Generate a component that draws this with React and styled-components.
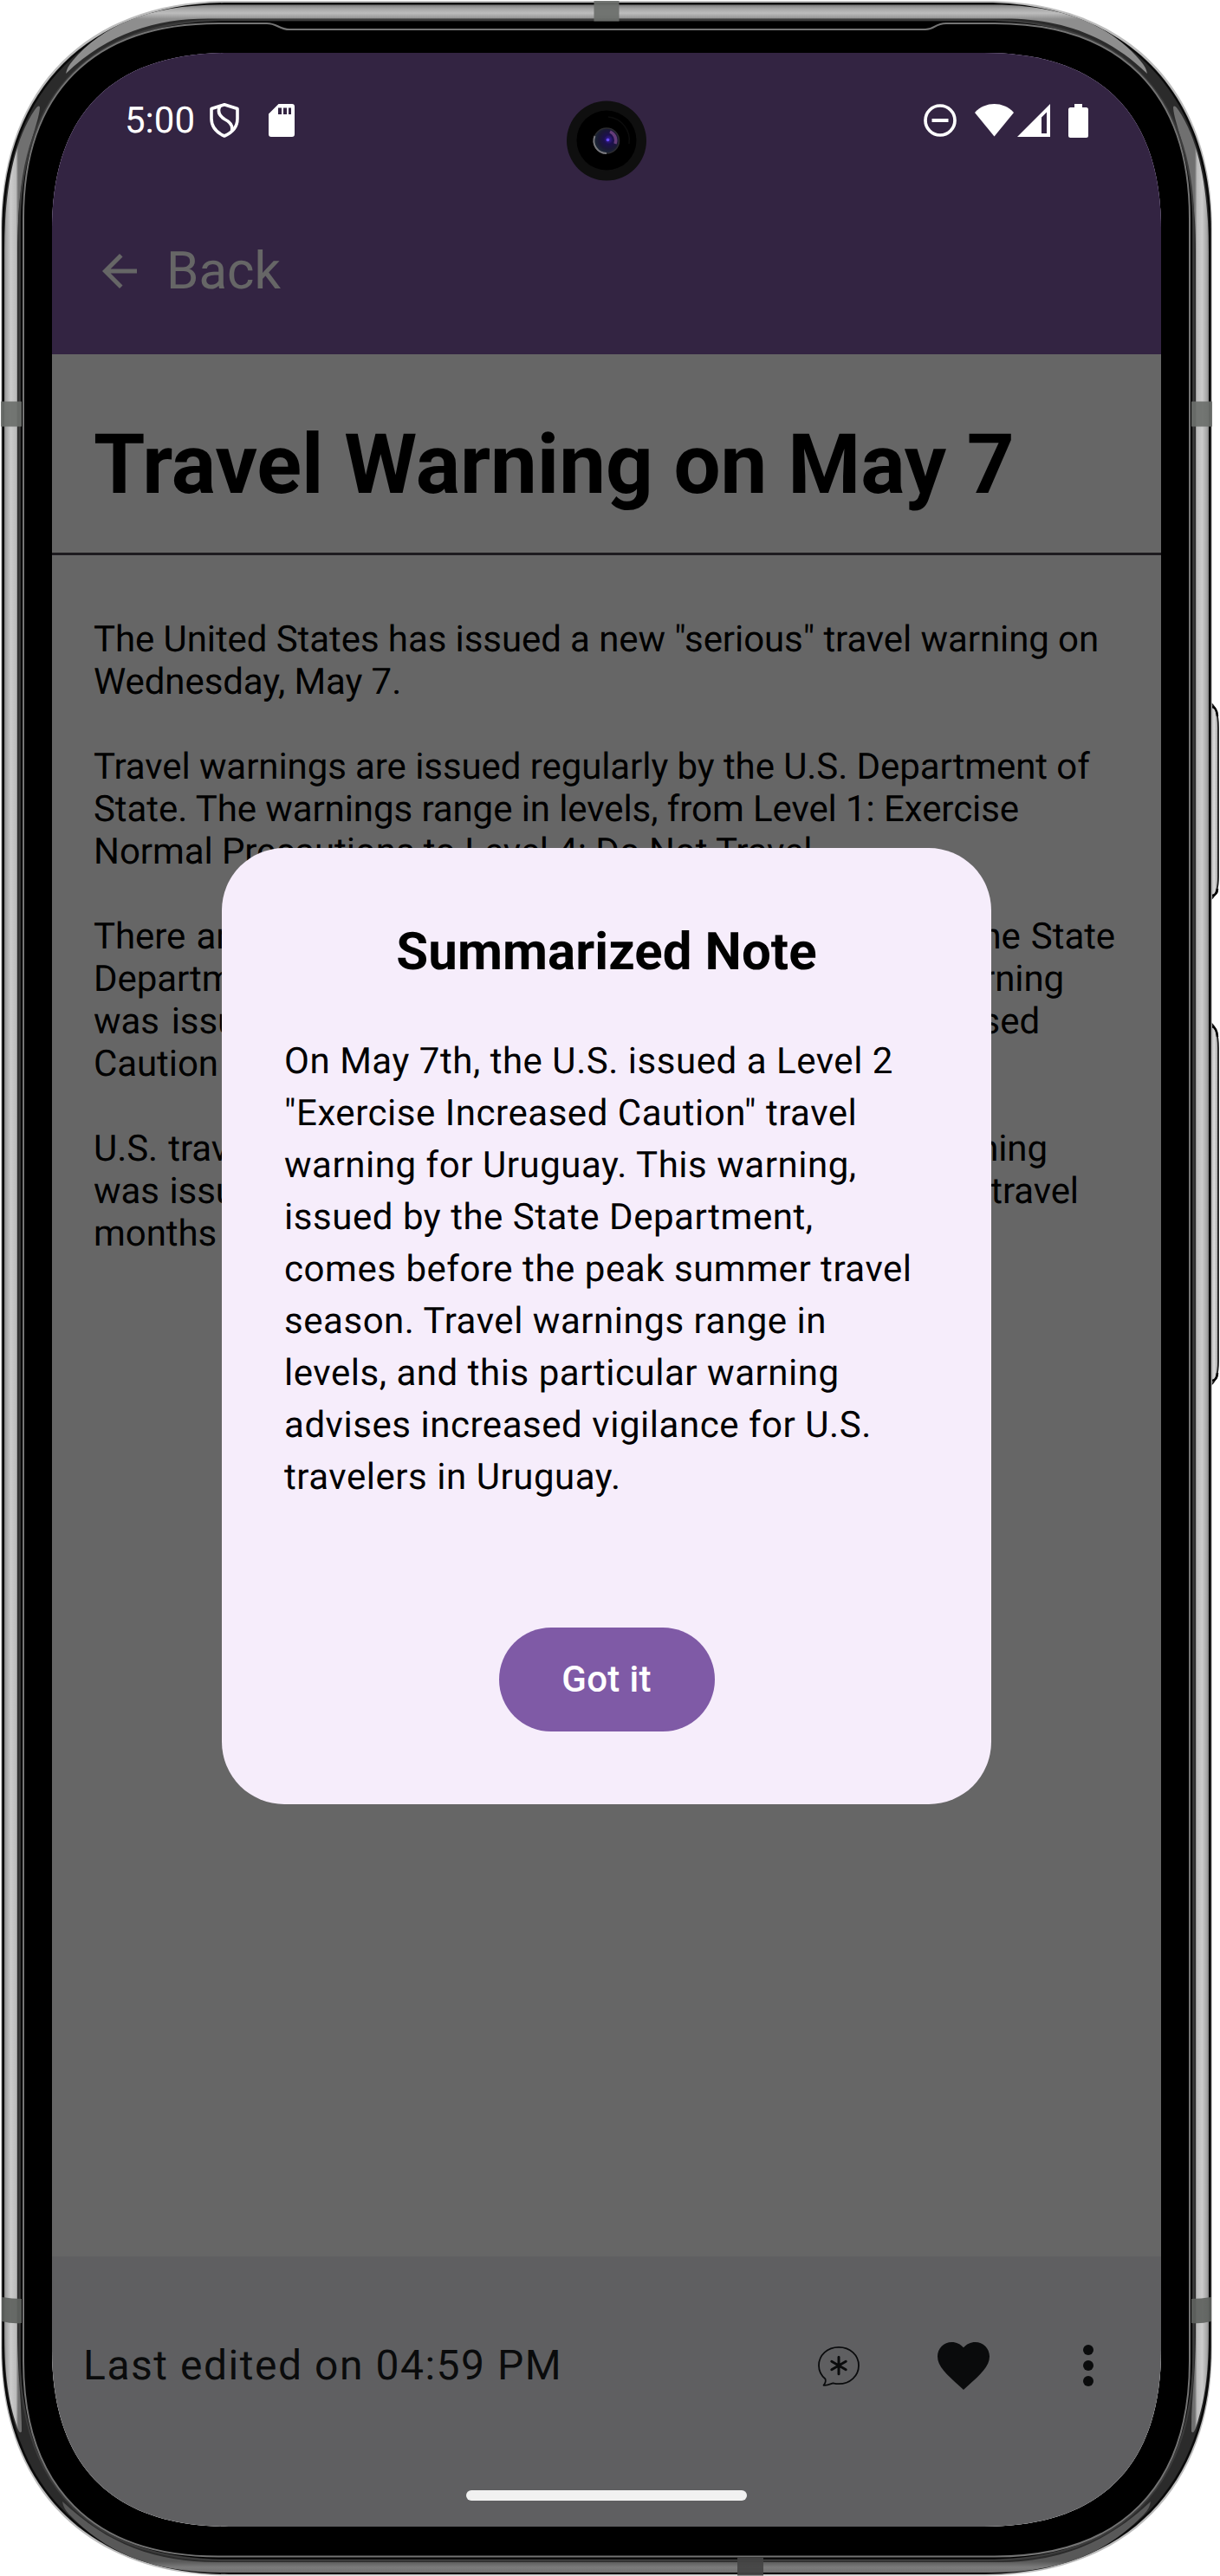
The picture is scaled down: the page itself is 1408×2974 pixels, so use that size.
import React from "react";
import styled, { createGlobalStyle } from "styled-components";

const GlobalStyle = createGlobalStyle`
  * { box-sizing: border-box; }
  body { margin: 0; background: #fff; text-rendering: geometricPrecision; }
`;

const SCREEN_CLIP =
  "path('M0 204C0 70 70 0 204 0H1076C1210 0 1280 70 1280 204V2652C1280 2786 1210 2856 1076 2856H204C70 2856 0 2786 0 2652Z')";

const Device = styled.main`
  position: relative;
  width: 1408px;
  height: 2974px;
  padding: 61px 68px 57px 60px;
  font-family: Roboto, "Liberation Sans", sans-serif;
  color: #000;
`;

const FrameSvg = styled.svg`
  position: absolute;
  inset: 0;
  display: block;
`;

const Screen = styled.div`
  position: relative;
  display: flex;
  flex-direction: column;
  width: 1280px;
  height: 2856px;
  background: #fff;
  clip-path: ${SCREEN_CLIP};
`;

const TopBar = styled.header`
  display: flex;
  align-items: center;
  flex: none;
  height: 348px;
  padding: 156px 48px 0;
  gap: 24px;
  background: #7f5aa6;
  color: #fff;
  font-size: 60px;
  line-height: 70px;
`;

const NoteTitle = styled.h1`
  flex: none;
  margin: 0;
  height: 232px;
  padding: 72px 48px 0;
  border-bottom: 3px solid #49454f;
  font-size: 96px;
  line-height: 113px;
  font-weight: 700;
  letter-spacing: -0.06px;
  white-space: nowrap;
`;

const NoteBody = styled.section`
  display: flex;
  flex-direction: column;
  flex: 1;
  gap: 49px;
  padding: 73px 48px 0;
  font-size: 42px;
  line-height: 49px;
  letter-spacing: -0.08px;
`;

const Paragraph = styled.p`
  display: flex;
  flex-direction: column;
  margin: 0;
`;

const Line = styled.span`
  display: block;
  white-space: nowrap;
  ${(p) => p.$width && `width: ${p.$width}px; white-space: normal; text-align-last: justify;`}
`;

const BottomBar = styled.footer`
  display: flex;
  align-items: flex-start;
  justify-content: space-between;
  flex: none;
  height: 312px;
  padding: 54px 12px 0 36px;
  background: #eeeef3;
  color: #191c20;
`;

const EditedLabel = styled.span`
  line-height: 143px;
  font-size: 48px;
  letter-spacing: 1.53px;
`;

const Actions = styled.div`
  display: flex;
`;

const IconButton = styled.button`
  display: flex;
  align-items: center;
  justify-content: center;
  width: 144px;
  height: 144px;
  padding: 0;
  border: 0;
  background: none;
  color: inherit;
`;

const Scrim = styled.div`
  position: absolute;
  inset: 0;
  display: flex;
  align-items: flex-start;
  justify-content: center;
  padding-top: 918px;
  background: rgba(0, 0, 0, 0.6);
`;

const Dialog = styled.div`
  display: flex;
  flex-direction: column;
  align-items: center;
  width: 888px;
  height: 1104px;
  padding: 85px 72px 84px;
  border-radius: 72px;
  background: #f6edfb;
`;

const DialogTitle = styled.h2`
  margin: 0 0 62px;
  font-size: 60px;
  line-height: 70px;
  font-weight: 700;
  letter-spacing: 0.05px;
`;

const DialogText = styled.p`
  align-self: stretch;
  margin: 0;
  font-size: 42px;
  line-height: 60px;
  letter-spacing: 0.54px;
  white-space: nowrap;
`;

const DialogButton = styled.button`
  flex: none;
  width: 249px;
  height: 120px;
  margin-top: 143px;
  padding: 0;
  border: 0;
  border-radius: 60px;
  background: #7f5aa6;
  color: #fff;
  font: 500 42px/60px Roboto, "Liberation Sans", sans-serif;
  letter-spacing: 0.3px;
`;

const StatusBar = styled.div`
  position: absolute;
  inset: 0 0 auto;
  display: flex;
  align-items: center;
  justify-content: space-between;
  height: 156px;
  padding: 0 84px;
  color: #fff;
  font-size: 42px;
`;

const StatusGroup = styled.div`
  display: flex;
  align-items: center;
`;

const Glyph = styled.svg`
  display: block;
  margin-left: ${(p) => p.$gap || 0}px;
`;

const Camera = styled.svg`
  position: absolute;
  left: 594px;
  top: 55px;
`;

const HomePill = styled.div`
  position: absolute;
  left: 478px;
  bottom: 30px;
  width: 324px;
  height: 12px;
  border-radius: 6px;
  background: #f1f1f1;
`;

/* Outline with continuous-curvature corners. */
const squircle = (l, t, r, b, s, c) =>
  `M${l} ${t + s}C${l} ${t + c} ${l + c} ${t} ${l + s} ${t}H${r - s}C${r - c} ${t} ${r} ${t + c} ${r} ${t + s}` +
  `V${b - s}C${r} ${b - c} ${r - c} ${b} ${r - s} ${b}H${l + s}C${l + c} ${b} ${l} ${b - c} ${l} ${b - s}Z`;

const SideHighlight = () => (
  <path
    d="M5 290C5 228 14 165 40 127Q45 120 46 124C44 150 20 186 20 290V2690C20 2740 25 2770 25 2807Q23 2811 20 2803C9 2770 5 2740 5 2690Z"
    fill="url(#side)"
  />
);

const PhoneFrame = () => (
  <FrameSvg width="1408" height="2974" viewBox="0 0 1408 2974" aria-hidden="true">
    <defs>
      <linearGradient id="side" gradientUnits="userSpaceOnUse" x1="4" y1="0" x2="21" y2="0">
        <stop offset="0" stopColor="#777" />
        <stop offset=".2" stopColor="#a8a8a8" />
        <stop offset=".5" stopColor="#cbcbcb" />
        <stop offset=".85" stopColor="#bcbcbc" />
        <stop offset="1" stopColor="#707070" />
      </linearGradient>
      <linearGradient id="top" gradientUnits="userSpaceOnUse" x1="0" y1="5" x2="0" y2="22">
        <stop offset="0" stopColor="#777" />
        <stop offset=".3" stopColor="#a6a6a6" />
        <stop offset=".6" stopColor="#bdbdbd" />
        <stop offset="1" stopColor="#8e8e8e" />
      </linearGradient>
      <linearGradient id="bottom" gradientUnits="userSpaceOnUse" x1="0" y1="2957" x2="0" y2="2971">
        <stop offset="0" stopColor="#585858" />
        <stop offset=".5" stopColor="#7c7c7c" />
        <stop offset="1" stopColor="#6c6c6c" />
      </linearGradient>
      <linearGradient id="key" x1="0" y1="0" x2="1" y2="0">
        <stop offset="0" stopColor="#777" />
        <stop offset=".5" stopColor="#dedede" />
        <stop offset="1" stopColor="#a0a0a0" />
      </linearGradient>
      <radialGradient id="lens" cx=".58" cy=".45" r=".6">
        <stop offset="0" stopColor="#3c22a8" />
        <stop offset=".3" stopColor="#1c104e" />
        <stop offset=".65" stopColor="#1a1834" />
        <stop offset="1" stopColor="#1b2c36" />
      </radialGradient>
    </defs>
    <path d="M1396 811Q1406 816 1406 840V1012Q1406 1034 1396 1039Z" fill="url(#key)" stroke="#1a1a1a" strokeWidth="1.8" />
    <path d="M1396 1180Q1406 1186 1406 1210V1572Q1406 1594 1396 1600Z" fill="url(#key)" stroke="#1a1a1a" strokeWidth="1.8" />
    <path d="M1399 816Q1404.500 817 1405 827M1399 1034Q1405 1033 1405 1026M1399 1185Q1404.500 1187 1405 1197M1399 1594Q1405 1593 1405 1585" fill="none" stroke="#000" strokeWidth="2.5" />
    <path d={squircle(1.2, 1, 1398.8, 2973.5, 262, 100)} fill="#bdbdbd" />
    <path d={squircle(2.2, 3, 1397.8, 2972, 262, 101)} fill="#0a0a0a" />
    <path d={squircle(5, 6, 1395, 2969, 259, 99)} fill="#2b2b2b" />
    <SideHighlight />
    <g transform="matrix(-1 0 0 1 1400 0)">
      <SideHighlight />
    </g>
    <path
      d="M76 85Q77 78 84 70C118 30 172 5 256 5.500H1144C1228 5 1282 30 1316 70Q1323 78 1324 85C1275 38 1220 21.500 1160 21.500H240C180 21.500 125 38 76 85Z"
      fill="url(#top)"
    />
    <path
      d="M72 2888Q73 2896 80 2903C120 2944 170 2970 256 2970H1144C1230 2970 1280 2944 1320 2903Q1327 2896 1328 2888C1275 2938 1220 2958 1150 2958H250C180 2958 125 2938 72 2888Z"
      fill="url(#bottom)"
    />
    <path d={squircle(22.5, 23, 1377.5, 2956, 240, 84)} fill="none" stroke="#3c3c3c" strokeWidth="2" />
    <path d={squircle(24, 24.5, 1376, 2954.500, 238, 83)} fill="#000" />
    <path
      d="M27 252C27 107 107 27 252 27H308C320 27 322 34 334 34H1068C1080 34 1078 27 1092 27H1148C1293 27 1373 107 1373 252V2726C1373 2871 1293 2951.500 1148 2951.500H252C107 2951.500 27 2871 27 2726Z"
      fill="#000"
      stroke="#747474"
      strokeWidth="2"
    />
    <g fill="#6c6f6c" opacity=".93">
      <rect x="685.5" y="1" width="29" height="23.5" />
      <rect x="1" y="463.500" width="24" height="29" />
      <rect x="1375" y="463.500" width="24" height="29" />
      <path d="M2 2652Q14 2654 25 2654V2682Q14 2683 2 2680Z" fill="#5f625f" />
      <path d="M1398 2652Q1386 2654 1375 2654V2682Q1386 2683 1398 2680Z" fill="#5f625f" />
      <rect x="851" y="2953" width="30" height="20.5" fill="#444" />
    </g>
  </FrameSvg>
);

export default function App() {
  return (
    <>
      <GlobalStyle />
      <Device>
        <PhoneFrame />
        <Screen>
          <TopBar>
            <svg width="60" height="60" viewBox="0 0 24 24" fill="currentColor">
              <path d="M20 11H7.830l5.590-5.590L12 4l-8 8 8 8 1.410-1.410L7.830 13H20v-2z" />
            </svg>
            <span>Back</span>
          </TopBar>
          <NoteTitle>Travel Warning on May 7</NoteTitle>
          <NoteBody>
            <Paragraph>
              <Line>The United States has issued a new "serious" travel warning on</Line>
              <Line>Wednesday, May 7.</Line>
            </Paragraph>
            <Paragraph>
              <Line>Travel warnings are issued regularly by the U.S. Department of</Line>
              <Line>State. The warnings range in levels, from Level 1: Exercise</Line>
              <Line>Normal Precautions to Level 4: Do Not Travel.</Line>
            </Paragraph>
            <Paragraph>
              <Line $width={1179}>There are several countries under some advisory, and the State</Line>
              <Line $width={1120}>Department has updated Uruguay to a Level 2. The warning</Line>
              <Line $width={1092}>was issued on May 7 and is a Level 2: Exercise Increased</Line>
              <Line>Caution</Line>
            </Paragraph>
            <Paragraph>
              <Line $width={1101}>U.S. travelers headed to Uruguay should know this warning</Line>
              <Line $width={1137}>was issued just ahead of the peak of the busy summer travel</Line>
              <Line>months</Line>
            </Paragraph>
          </NoteBody>
          <BottomBar>
            <EditedLabel>Last edited on 04:59 PM</EditedLabel>
            <Actions>
              <IconButton aria-label="Summarize">
                <svg width="72" height="72" viewBox="0 0 72 72" fill="none" stroke="currentColor" strokeLinejoin="round">
                  <path
                    d="M36 14.800C49 14.800 59 24 59 36S49 57.200 36 57.200C33.500 57.200 31.500 56.800 29.500 56.300C26 57.500 22.500 59.600 18.500 58.800C20.500 56.500 21.500 54.500 20.500 51.500C15.800 47.500 13 42 13 36C13 24 23 14.800 36 14.800Z"
                    strokeWidth="1.8"
                  />
                  <path d="M36 26.300V45.700M27.800 31.300L44.200 40.700M44.200 31.300L27.800 40.700" strokeWidth="3" strokeLinecap="round" />
                </svg>
              </IconButton>
              <IconButton aria-label="Favorite">
                <svg width="72" height="72" viewBox="0 0 24 24" fill="currentColor">
                  <path d="M12 21.350l-1.450-1.320C5.400 15.360 2 12.280 2 8.500 2 5.420 4.420 3 7.500 3c1.740 0 3.410.810 4.500 2.090C13.090 3.810 14.760 3 16.500 3 19.580 3 22 5.420 22 8.500c0 3.780-3.400 6.860-8.550 11.540L12 21.350z" />
                </svg>
              </IconButton>
              <IconButton aria-label="More">
                <svg width="72" height="72" viewBox="0 0 24 24" fill="currentColor">
                  <circle cx="12" cy="6" r="2" />
                  <circle cx="12" cy="12" r="2" />
                  <circle cx="12" cy="18" r="2" />
                </svg>
              </IconButton>
            </Actions>
          </BottomBar>
          <Scrim>
            <Dialog role="dialog">
              <DialogTitle>Summarized Note</DialogTitle>
              <DialogText>
                On May 7th, the U.S. issued a Level 2<br />
                "Exercise Increased Caution" travel<br />
                warning for Uruguay. This warning,<br />
                issued by the State Department,<br />
                comes before the peak summer travel<br />
                season. Travel warnings range in<br />
                levels, and this particular warning<br />
                advises increased vigilance for U.S.<br />
                travelers in Uruguay.
              </DialogText>
              <DialogButton>Got it</DialogButton>
            </Dialog>
          </Scrim>
          <StatusBar>
            <StatusGroup>
              <span>5:00</span>
              <Glyph $gap={15.5} width="36" height="42" viewBox="0 0 36 42" fill="none" stroke="currentColor" strokeWidth="3.6">
                <path d="M18 2.800L33 7.500V19C33 28 27 35 18 39C9 35 3 28 3 19V7.500Z" strokeLinejoin="round" />
                <path d="M13 4.500C10 10 11 15 18 19.500C25 23 28 27 26.500 33" />
              </Glyph>
              <Glyph $gap={33.5} width="30" height="38" viewBox="0 0 30 38" fill="currentColor">
                <path
                  fillRule="evenodd"
                  d="M11.500 0H27Q30 0 30 3V35Q30 38 27 38H3Q0 38 0 35V11.500ZM11 4.500V12H15V4.500ZM17 4.500V12H21V4.500ZM23 4.500V12H26V4.500Z"
                />
              </Glyph>
            </StatusGroup>
            <StatusGroup>
              <Glyph width="38" height="38" viewBox="0 0 38 38" fill="none" stroke="currentColor">
                <circle cx="19" cy="19" r="17" strokeWidth="3.700" />
                <path d="M9.500 19H28.500" strokeWidth="3.800" />
              </Glyph>
              <Glyph $gap={21.5} width="45" height="38" viewBox="0 0 45 38" fill="currentColor">
                <path d="M22.500 37.500L0 10C12 -3.200 33 -3.200 45 10Z" />
              </Glyph>
              <Glyph $gap={4} width="38" height="38" viewBox="0 0 38 38" fill="currentColor">
                <path fillRule="evenodd" d="M38 0V38H0ZM34 9.500L28 15.500V34H34Z" />
              </Glyph>
              <Glyph $gap={21} width="23" height="39" viewBox="0 0 23 39" fill="currentColor">
                <path d="M7 0H16V4H20.500Q23 4 23 6.500V36.500Q23 39 20.500 39H2.500Q0 39 0 36.500V6.500Q0 4 2.500 4H7Z" />
              </Glyph>
            </StatusGroup>
          </StatusBar>
          <Camera width="92" height="94" viewBox="0 0 92 94">
            <circle cx="46" cy="46.500" r="46" fill="#0f0f0f" />
            <circle cx="46" cy="46" r="34.500" fill="#000" />
            <path d="M48 19A27 27 0 0 1 72 50" fill="none" stroke="#0c0c0c" strokeWidth="1.500" />
            <circle cx="46" cy="46.500" r="14.500" fill="url(#lens)" stroke="#2b2b2f" strokeWidth="1.500" />
            <path d="M32.500 41A14.500 14.500 0 0 0 46 61" fill="none" stroke="#77777c" strokeWidth="2" />
            <path d="M50 36A11 11 0 0 1 56 50" fill="none" stroke="#7d4a8c" strokeWidth="3.500" opacity=".75" />
            <circle cx="47.500" cy="45.500" r="1.800" fill="#6a4dff" />
          </Camera>
          <HomePill />
        </Screen>
      </Device>
    </>
  );
}
